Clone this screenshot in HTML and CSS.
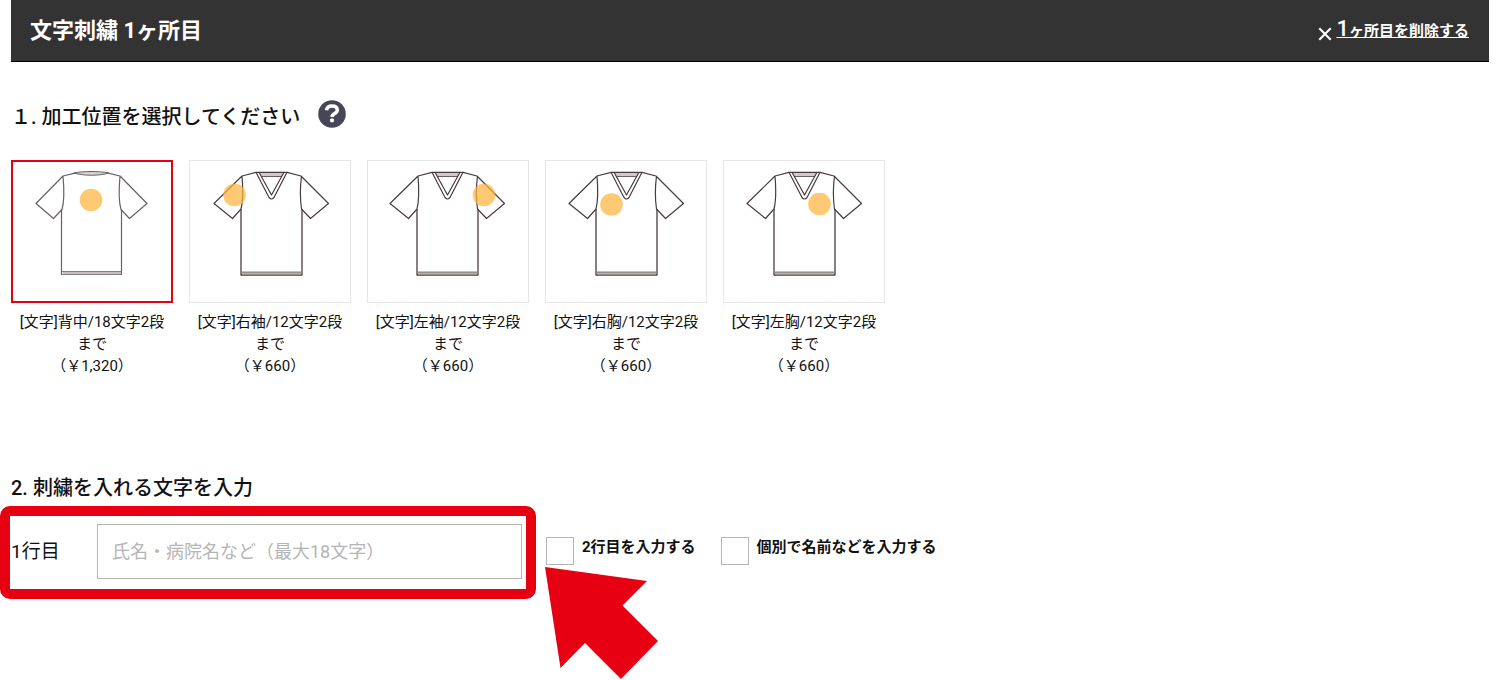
FILE: index.html
```html
<!DOCTYPE html>
<html lang="ja">
<head>
<meta charset="utf-8">
<meta name="viewport" content="width=device-width, initial-scale=1">
<title>文字刺繍</title>
<link rel="stylesheet" href="styles.css">
</head>
<body>
<svg class="defs" aria-hidden="true">
  <symbol id="shirt-back" viewBox="0 0 160 141">
    <g fill="none" stroke="#6b5f60" stroke-width="1.2" stroke-linejoin="round">
      <path d="M51 15 24 42.500 41.500 57.500 50 48.500C53 38 52 26 51 15L64 11.800M95 11.800 108 15 135 42.500 117.500 57.500 109 48.500C106 38 107 26 108 15"/>
      <path d="M49.500 48.500V113.500H109.500V48.500"/>
    </g>
    <path d="M62 12C72 10 86 10 97 12 87 15 72 15 62 12Z" fill="#d8d3d3" stroke="#6b5f60"/>
    <path d="M51 110H109V113.500H51Z" fill="#c4bebe"/>
    <path d="M50 110.500H109.500M50 113.500H109.500" stroke="#877d7e" stroke-width="1"/>
  </symbol>
  <symbol id="shirt-front" viewBox="0 0 160 141">
    <path d="M69 11H94L92 15.500H71.500Z" fill="#d0caca"/>
    <g fill="none" stroke="#493c3e" stroke-width="1.2" stroke-linejoin="round">
      <path d="M66 11.300 52 15 24 42.500 42.500 57.500 51 48C53.500 38 53 27 52 15M97 11.300 111 15 138.500 42.500 120.500 57.500 111.500 48C110 38 110 27 111.500 15"/>
      <path d="M51 48V114H112V48" stroke-width="1.300"/>
      <path d="M66 11.300 79 36.500Q81.500 39.500 84 36.500L97 11.300ZM69 11.300 81.500 34 94 11.300"/>
      <path d="M71.500 15.500H92" stroke-width=".8"/>
    </g>
    <path d="M52 111H111V113.500H52Z" fill="#b5aeae"/>
    <path d="M52 111H111" stroke="#6c6061" stroke-width=".8"/>
  </symbol>
</svg>

<div class="page">
  <header class="bar">
    <h1 class="bar-title">文字刺繍 1ヶ所目</h1>
    <a class="remove" href="#">
      <svg class="remove-icon" viewBox="0 0 14 14" aria-hidden="true"><path d="M2 2 12 12M12 2 2 12" stroke="#fff" stroke-width="1.800"/></svg>
      <span class="remove-text"><span class="remove-number">1</span>ヶ所目を削除する</span>
    </a>
  </header>

  <main>
    <section>
      <div class="heading-row">
        <h2 class="heading">１. 加工位置を選択してください</h2>
        <button class="help" type="button" aria-label="ヘルプ">
          <svg viewBox="0 0 28 28" aria-hidden="true">
            <circle cx="14" cy="14" r="13.800" fill="#474658"/>
            <path d="M8.500 10.300C8.900 7.300 11 6 14 6 17.200 6 19.300 7.600 19.300 10.200 19.300 13.800 14 13.200 14 17" fill="none" stroke="#fff" stroke-width="3.500"/>
            <rect x="12.100" y="18.500" width="3.800" height="3.800" rx="1" fill="#fff"/>
          </svg>
        </button>
      </div>

      <div class="positions" role="radiogroup" aria-label="加工位置">
        <label class="position">
          <input class="position-radio" type="radio" name="position" checked>
          <span class="position-picture"><svg viewBox="0 0 160 141" aria-hidden="true"><use href="#shirt-back"/><circle class="spot" cx="79" cy="39" r="11.300"/></svg></span>
          <span class="caption">[文字]背中/18文字2段まで<br>（￥1,320）</span>
        </label>
        <label class="position">
          <input class="position-radio" type="radio" name="position">
          <span class="position-picture"><svg viewBox="0 0 160 141" aria-hidden="true"><use href="#shirt-front"/><circle class="spot" cx="44.500" cy="34" r="11.300"/></svg></span>
          <span class="caption">[文字]右袖/12文字2段まで<br>（￥660）</span>
        </label>
        <label class="position">
          <input class="position-radio" type="radio" name="position">
          <span class="position-picture"><svg viewBox="0 0 160 141" aria-hidden="true"><use href="#shirt-front" x="-2"/><circle class="spot" cx="116" cy="34" r="11.300"/></svg></span>
          <span class="caption">[文字]左袖/12文字2段まで<br>（￥660）</span>
        </label>
        <label class="position">
          <input class="position-radio" type="radio" name="position">
          <span class="position-picture"><svg viewBox="0 0 160 141" aria-hidden="true"><use href="#shirt-front" x="-1"/><circle class="spot" cx="65.500" cy="43.500" r="11.300"/></svg></span>
          <span class="caption">[文字]右胸/12文字2段まで<br>（￥660）</span>
        </label>
        <label class="position">
          <input class="position-radio" type="radio" name="position">
          <span class="position-picture"><svg viewBox="0 0 160 141" aria-hidden="true"><use href="#shirt-front" x="-1"/><circle class="spot" cx="95.500" cy="43" r="11.300"/></svg></span>
          <span class="caption">[文字]左胸/12文字2段まで<br>（￥660）</span>
        </label>
      </div>
    </section>

    <section class="text-section">
      <h2 class="heading">2. 刺繍を入れる文字を入力</h2>
      <div class="text-row">
        <div class="field">
          <label class="field-label" for="line1">1行目</label>
          <input class="field-input" id="line1" type="text" placeholder="氏名・病院名など（最大18文字）">
          <span class="highlight" aria-hidden="true"></span>
          <svg class="arrow" viewBox="0 0 114 112" aria-hidden="true"><path d="M0 0 102 14 77.500 38.500 113 74 76 112 40 76 15.500 101Z" fill="#e60012"/></svg>
        </div>
        <label class="option"><input class="option-box" type="checkbox"><span class="option-text">2行目を入力する</span></label>
        <label class="option"><input class="option-box" type="checkbox"><span class="option-text">個別で名前などを入力する</span></label>
      </div>
    </section>
  </main>
</div>
</body>
</html>
```

FILE: styles.css
```css
* {
  box-sizing: border-box;
}

body {
  margin: 0;
  background: #fff;
  color: #111;
  font-family: Roboto, "Noto Sans CJK JP", sans-serif;
  font-size: 15px;
  line-height: 22px;
}

.defs {
  position: absolute;
  width: 0;
  height: 0;
}

.page {
  min-height: 100vh;
  padding: 0 11px;
}

.bar {
  display: flex;
  align-items: center;
  justify-content: space-between;
  min-height: 62px;
  padding: 0 20px 0 19px;
  background: #333;
  border-bottom: 1px solid #000;
  color: #fff;
}

.bar-title {
  margin: 0;
  font-size: 22px;
  font-weight: 700;
  line-height: 30px;
}

.remove {
  display: flex;
  align-items: center;
  gap: 3px;
  margin-bottom: 2px;
  color: #fff;
  font-weight: 700;
  text-decoration: none;
}

.remove-icon {
  width: 16px;
  height: 16px;
  margin-top: 8px;
}

.remove-text {
  text-decoration: underline 1px;
  text-decoration-skip-ink: none;
}

.remove-number {
  font-size: 22px;
  font-weight: 500;
}

.heading-row {
  display: flex;
  align-items: center;
  gap: 18px;
  margin: 38px 0 26px;
}

.heading {
  margin: 0;
  font-size: 20px;
  font-weight: 500;
  line-height: 30px;
}

.help {
  width: 28px;
  height: 28px;
  margin-bottom: 6px;
  padding: 0;
  border: 0;
  background: none;
  cursor: pointer;
}

.help svg,
.position-picture svg {
  display: block;
  width: 100%;
}

.positions {
  display: flex;
  flex-wrap: wrap;
  gap: 16px;
}

.position {
  position: relative;
  width: 162px;
  text-align: center;
  cursor: pointer;
}

.position-radio {
  position: absolute;
  margin: 0;
  opacity: 0;
}

.position-picture {
  display: block;
  margin-bottom: 8px;
  border: 1px solid #e6e6e6;
}

.position-radio:checked + .position-picture {
  border-color: #e60012;
  box-shadow: inset 0 0 0 1px #e60012;
}

.spot {
  fill: #fdb43c;
  fill-opacity: .72;
}

.caption {
  display: block;
  padding: 0 5px;
}

.text-section {
  margin-top: 96px;
}

.text-row {
  display: flex;
  align-items: center;
  margin-top: 21px;
}

.field {
  position: relative;
  display: flex;
  align-items: center;
  margin-right: 24px;
}

.field-label {
  width: 86px;
  font-size: 19px;
}

.field-input {
  width: 425px;
  height: 55px;
  padding: 0 14px;
  border: 1px solid #b5b5b5;
  border-radius: 0;
  background: #fff;
  color: #111;
  font: inherit;
  font-size: 18px;
}

.field-input::placeholder {
  color: #b5b5b5;
  opacity: 1;
}

.highlight {
  position: absolute;
  inset: -18px -14px -20px -11px;
  border: 10px solid #e60012;
  border-radius: 10px;
  pointer-events: none;
}

.arrow {
  position: absolute;
  top: 43px;
  left: 534px;
  width: 114px;
  height: 112px;
  pointer-events: none;
}

.option {
  display: flex;
  gap: 8px;
  margin: 0 25px 2px 0;
  font-weight: 700;
  line-height: 20px;
  cursor: pointer;
}

.option-box {
  appearance: none;
  width: 28px;
  height: 28px;
  margin: 0;
  border: 1px solid #b5b5b5;
  background: #fff;
}

.option-box:checked {
  background: #333;
}
```
